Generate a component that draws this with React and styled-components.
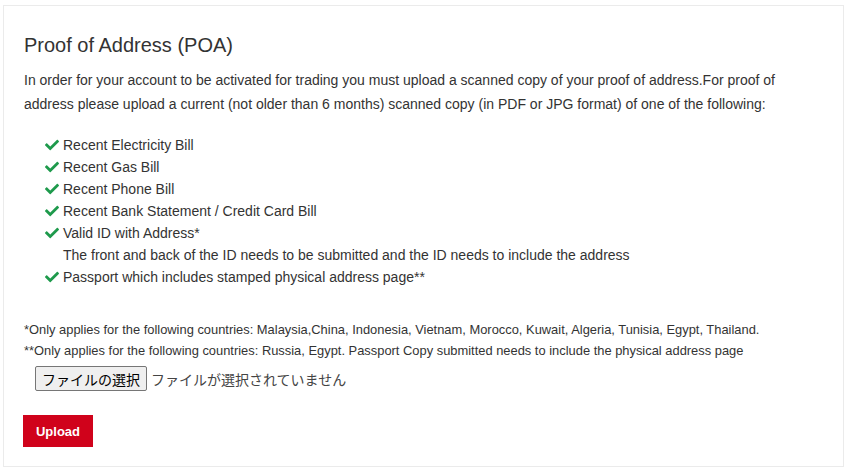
import styled, { createGlobalStyle } from "styled-components";
import { FaCheck } from "react-icons/fa";

const GlobalStyle = createGlobalStyle`
  body {
    margin: 0;
    background: #fff;
    font-family: "Liberation Sans", Arial, "Noto Sans CJK JP", sans-serif;
    color: #333;
  }
`;

const Card = styled.section`
  margin: 5px 5px 0 3px;
  height: 462px;
  box-sizing: border-box;
  border: 1px solid #ebebeb;
  padding: 28px 20px 0 20px;
`;

const Title = styled.h3`
  margin: 0 0 12px;
  font-size: 20px;
  font-weight: 400;
  line-height: 22px;
  color: #333;
`;

const Intro = styled.p`
  margin: 0 0 18px;
  font-size: 14px;
  line-height: 24px;
`;

const List = styled.ul`
  list-style: none;
  margin: 0 0 31px;
  padding: 0 0 0 21px;
`;

const Item = styled.li`
  display: flex;
  align-items: flex-start;
  font-size: 14px;
  line-height: 22px;
`;

const Check = styled(FaCheck)`
  flex: none;
  width: 14px;
  height: 14px;
  margin: 4px 4px 0 0;
  color: #1e9a4c;
`;

const Note = styled.p`
  margin: 0;
  font-size: 12.9px;
  line-height: 21px;
`;

const FileRow = styled.div`
  display: flex;
  align-items: center;
  gap: 4px;
  margin: 5px 0 0 11px;
  font-family: "Liberation Sans", "Noto Sans CJK JP", sans-serif;
  font-size: 14px;
`;

const HiddenInput = styled.input`
  display: none;
`;

const FileButton = styled.label`
  display: inline-flex;
  align-items: center;
  height: 25px;
  box-sizing: border-box;
  padding: 0 6px;
  background: #efefef;
  border: 1px solid #767676;
  border-radius: 2px;
  color: #000;
  cursor: pointer;
`;

const FileName = styled.span`
  color: #444;
`;

const UploadButton = styled.button`
  margin: 24px 0 0 -1px;
  width: 70px;
  height: 32px;
  border: none;
  background: #d0021b;
  color: #fff;
  font-family: "Liberation Sans", Arial, sans-serif;
  font-weight: 700;
  font-size: 13px;
  cursor: pointer;
`;

const items = [
  ["Recent Electricity Bill"],
  ["Recent Gas Bill"],
  ["Recent Phone Bill"],
  ["Recent Bank Statement / Credit Card Bill"],
  [
    "Valid ID with Address*",
    "The front and back of the ID needs to be submitted and the ID needs to include the address",
  ],
  ["Passport which includes stamped physical address page**"],
];

const App = () => (
  <>
    <GlobalStyle />
    <Card>
      <Title>Proof of Address (POA)</Title>
      <Intro>
        In order for your account to be activated for trading you must upload a
        scanned copy of your proof of address.For proof of address please upload
        a current (not older than 6 months) scanned copy (in PDF or JPG format)
        of one of the following:
      </Intro>
      <List>
        {items.map(([text, sub]) => (
          <Item key={text}>
            <Check />
            <span>
              {text}
              {sub && (
                <>
                  <br />
                  {sub}
                </>
              )}
            </span>
          </Item>
        ))}
      </List>
      <Note>
        *Only applies for the following countries: Malaysia,China, Indonesia,
        Vietnam, Morocco, Kuwait, Algeria, Tunisia, Egypt, Thailand.
      </Note>
      <Note>
        **Only applies for the following countries: Russia, Egypt. Passport Copy
        submitted needs to include the physical address page
      </Note>
      <FileRow>
        <FileButton htmlFor="poa-file">ファイルの選択</FileButton>
        <HiddenInput id="poa-file" type="file" />
        <FileName>ファイルが選択されていません</FileName>
      </FileRow>
      <UploadButton>Upload</UploadButton>
    </Card>
  </>
);

export default App;
